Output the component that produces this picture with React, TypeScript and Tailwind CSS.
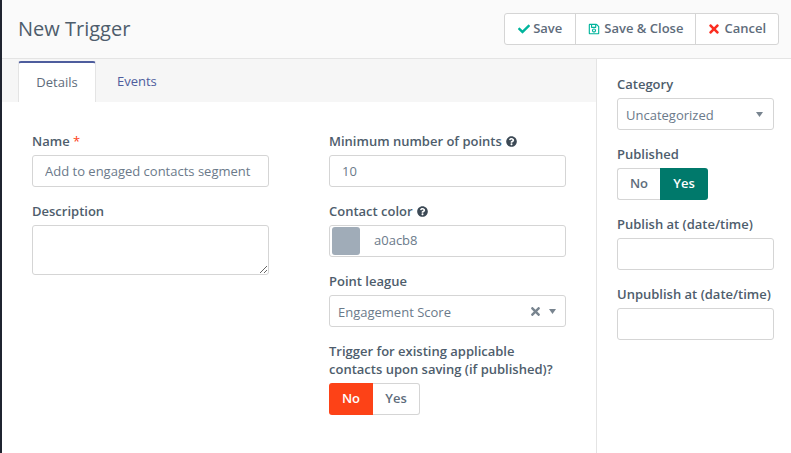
import { FaCheck, FaTimes, FaRegSave, FaQuestionCircle } from 'react-icons/fa';

const labelClass = 'block text-[13px] leading-[18px] font-semibold text-[#4e5d6c] mb-[5px]';
const inputClass =
  'block w-full h-[32px] rounded-[3px] border border-[#d5d5d5] bg-white text-[13px] text-[#6b7a8a] outline-none';

function Field({ label, children, className = '' }: { label: React.ReactNode; children: React.ReactNode; className?: string }) {
  return (
    <div className={className}>
      <label className={labelClass}>{label}</label>
      {children}
    </div>
  );
}

function Help() {
  return <FaQuestionCircle className="inline-block ml-[4px] mb-[2px] text-[11px] text-[#3c4955]" />;
}

function Caret() {
  return (
    <svg viewBox="0 0 7 5" className="h-[5px] w-[7px] shrink-0" aria-hidden="true">
      <polygon points="0,0 7,0 3.5,5" fill="#78848f" />
    </svg>
  );
}

function Toggle({ active }: { active: 'No' | 'Yes' }) {
  return (
    <div className="flex h-[32px] w-fit text-[13px] font-semibold">
      <div
        className={
          active === 'No'
            ? 'flex items-center justify-center w-[44px] rounded-l-[3px] bg-[#fd4217] text-white'
            : 'flex items-center justify-center w-[43px] rounded-l-[3px] border border-r-0 border-[#d5d5d5] bg-white text-[#5e6c7b]'
        }
      >
        No
      </div>
      <div
        className={
          active === 'Yes'
            ? 'flex items-center justify-center w-[48px] rounded-r-[3px] bg-[#00796b] text-white'
            : 'flex items-center justify-center w-[47px] rounded-r-[3px] border border-l-0 border-[#d5d5d5] bg-white text-[#5e6c7b]'
        }
      >
        Yes
      </div>
    </div>
  );
}

export default function App() {
  return (
    <div className="flex h-[453px] w-[791px] overflow-hidden bg-white font-['Open_Sans',sans-serif]">
      <div className="w-[2px] shrink-0 bg-[#1f2430]" />
      <div className="flex flex-1 flex-col min-w-0">
        {/* page header */}
        <div className="flex h-[59px] shrink-0 items-center justify-between border-b border-[#e4e4e4] bg-[#fafafa] pl-[16px] pr-[12px]">
          <h1 className="text-[20px] leading-none text-[#4e5d6c]">New Trigger</h1>
          <div className="flex h-[32px] rounded-[3px] border border-[#d5d5d5] bg-white text-[13px] font-semibold text-[#5e6c7b]">
            <div className="flex items-center gap-[3px] pl-[13px] pr-[13px]">
              <FaCheck className="text-[12px] text-[#00b49c]" />
              Save
            </div>
            <div className="flex items-center gap-[4px] border-l border-[#d5d5d5] pl-[12px] pr-[12px]">
              <FaRegSave className="text-[12px] text-[#00b49c]" />
              Save &amp; Close
            </div>
            <div className="flex items-center gap-[3px] border-l border-[#d5d5d5] pl-[11px] pr-[12px]">
              <FaTimes className="text-[14px] text-[#fb2d20]" />
              Cancel
            </div>
          </div>
        </div>

        <div className="flex flex-1 min-h-0">
          {/* main column */}
          <div className="flex-1 min-w-0">
            <div className="flex h-[43px] items-end bg-[#f6f6f6] pl-[16px]">
              <div className="flex h-[41px] w-[78px] items-center justify-center rounded-t-[3px] border-x border-[#e4e4e4] border-t-2 border-t-[#4e5d9d] bg-white text-[13px] text-[#5e6c7b]">
                Details
              </div>
              <div className="flex h-[41px] items-center pl-[21px] text-[13px] text-[#4e5d9d]">Events</div>
            </div>

            <div className="grid grid-cols-[237px_237px] gap-x-[60px] pl-[30px] pt-[30px]">
              <div className="flex flex-col gap-[15px]">
                <Field
                  label={
                    <>
                      Name <span className="font-normal text-[#fd4217]">*</span>
                    </>
                  }
                >
                  <input readOnly value="Add to engaged contacts segment" className={`${inputClass} px-[12px]`} />
                </Field>
                <Field label="Description">
                  <textarea readOnly className="block w-full h-[50px] rounded-[3px] border border-[#d5d5d5] bg-white outline-none" />
                </Field>
              </div>

              <div className="flex flex-col gap-[15px]">
                <Field
                  label={
                    <>
                      Minimum number of points
                      <Help />
                    </>
                  }
                >
                  <input readOnly value="10" className={`${inputClass} px-[12px]`} />
                </Field>
                <Field
                  label={
                    <>
                      Contact color
                      <Help />
                    </>
                  }
                >
                  <div className={`${inputClass} flex items-center pl-[2px]`}>
                    <div className="h-[28px] w-[28px] rounded-[3px] bg-[#a0acb8]" />
                    <span className="ml-[14px]">a0acb8</span>
                  </div>
                </Field>
                <Field label="Point league">
                  <div className={`${inputClass} flex items-center pl-[8px] pr-[9px]`}>
                    <span className="flex-1 pt-[3px]">Engagement Score</span>
                    <FaTimes className="text-[13px] text-[#78848f]" />
                    <span className="ml-[7px]">
                      <Caret />
                    </span>
                  </div>
                </Field>
                <div>
                  <label className={labelClass}>
                    Trigger for existing applicable
                    <br />
                    contacts upon saving (if published)?
                  </label>
                  <Toggle active="No" />
                </div>
              </div>
            </div>
          </div>

          {/* side column */}
          <div className="flex w-[195px] shrink-0 flex-col gap-[15px] border-l border-[#e4e4e4] pl-[20px] pr-[17px] pt-[16px]">
            <Field label="Category">
              <div className={`${inputClass} flex items-center justify-between pl-[8px] pr-[10px]`}>
                <span className="pt-[3px]">Uncategorized</span>
                <Caret />
              </div>
            </Field>
            <Field label="Published">
              <Toggle active="Yes" />
            </Field>
            <Field label="Publish at (date/time)">
              <input readOnly className={inputClass} />
            </Field>
            <Field label="Unpublish at (date/time)">
              <input readOnly className={inputClass} />
            </Field>
          </div>
        </div>
      </div>
    </div>
  );
}
